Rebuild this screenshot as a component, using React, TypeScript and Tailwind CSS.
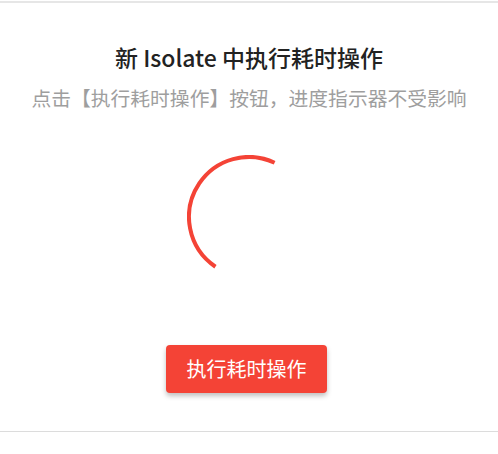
export default function App() {
  return (
    <div
      className="w-[498px] h-[454px] bg-white flex flex-col relative overflow-hidden"
      style={{ fontFamily: '"Noto Sans CJK SC", "Noto Sans", sans-serif' }}
    >
      <div className="h-[2px] mt-[1px] bg-[#e6e6e6]" />
      <div className="flex flex-col items-center">
        <div className="mt-[38px] h-[32px] leading-[32px] text-[23px] font-medium text-[#222222]">
          新 Isolate 中执行耗时操作
        </div>
        <div className="mt-[12px] h-[26px] leading-[26px] text-[19.8px] text-[#9e9e9e]">
          点击【执行耗时操作】按钮，进度指示器不受影响
        </div>
        <svg width="124" height="124" viewBox="0 0 124 124" className="mt-[44px]">
          <circle
            cx="62"
            cy="62"
            r="60"
            fill="none"
            stroke="#f44336"
            strokeWidth="4"
            strokeDasharray="179 377"
            transform="rotate(124 62 62)"
          />
        </svg>
        <button className="mt-[66px] ml-[-5px] w-[161px] h-[48px] rounded-[4px] bg-[#f44336] text-white text-[20px] shadow-[0_3px_5px_rgba(0,0,0,0.25)]">
          执行耗时操作
        </button>
      </div>
      <div className="absolute left-0 right-0 top-[431px] h-[1px] bg-[#dcdcdc]" />
    </div>
  );
}
